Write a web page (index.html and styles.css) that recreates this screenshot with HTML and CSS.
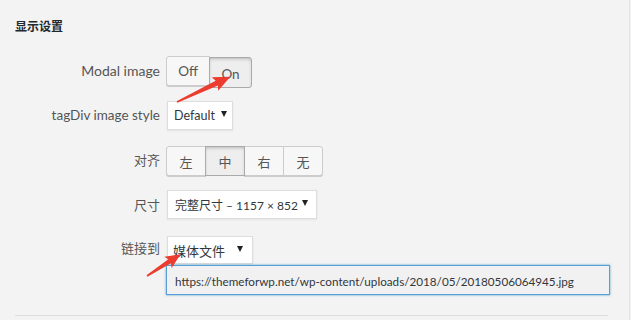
FILE: index.html
```html
<!DOCTYPE html>
<html lang="zh-CN">
<head>
    <meta charset="UTF-8">
    <title>显示设置</title>
    <link rel="stylesheet" href="styles.css">
</head>
<body>
    <div class="panel">
        <h2 class="title">显示设置</h2>

        <div class="settings">
            <div class="row row-modal">
                <span class="label">Modal image</span>
                <div class="btn-group">
                    <span class="btn">Off</span>
                    <span class="btn active">On</span>
                </div>
            </div>

            <div class="row row-style">
                <span class="label">tagDiv image style</span>
                <div class="select sel-style">Default <span class="caret"></span></div>
            </div>

            <div class="row row-align">
                <span class="label">对齐</span>
                <div class="btn-group">
                    <span class="btn btn-align">左</span>
                    <span class="btn btn-align active">中</span>
                    <span class="btn btn-align">右</span>
                    <span class="btn btn-align">无</span>
                </div>
            </div>

            <div class="row row-size">
                <span class="label">尺寸</span>
                <div class="select sel-size">完整尺寸 – 1157 × 852 <span class="caret"></span></div>
            </div>

            <div class="row row-link">
                <span class="label">链接到</span>
                <div class="link-col">
                    <div class="select sel-link">媒体文件 <span class="caret"></span></div>
                    <div class="url-input">https://themeforwp.net/wp-content/uploads/2018/05/20180506064945.jpg</div>
                </div>
            </div>
        </div>

        <div class="divider"></div>
    </div>

    <!-- red annotation arrows drawn over the form -->
    <svg class="arrows" width="631" height="320" viewBox="0 0 631 320">
        <g transform="translate(177 102) rotate(-25.3)">
            <polygon points="0,-0.9 44,-2.6 42,-7.5 59,0 42,7.5 44,2.6 0,0.9"/>
        </g>
        <g transform="translate(147 276) rotate(-33)">
            <polygon points="0,-0.9 27,-2.4 25,-6.8 40,0 25,6.8 27,2.4 0,0.9"/>
        </g>
    </svg>
</body>
</html>
```

FILE: styles.css
```css
    body {
        margin: 0;
        background-color: #f3f3f3;
        font-family: Lato, "Noto Sans CJK SC", sans-serif;
        font-size: 13.5px;
        color: #555;
    }

    .panel {
        height: 320px;
        padding-left: 15px;
        width: 614px;
        border-right: 1px solid #e2e2e2;
    }

    .title {
        margin: 0;
        padding-top: 16px;
        font-size: 12px;
        line-height: 20px;
        font-weight: bold;
        color: #23282d;
        font-family: "Noto Sans CJK SC", sans-serif;
    }

    .settings {
        display: flex;
        flex-direction: column;
    }

    .row {
        display: flex;
        align-items: center;
        gap: 6px;
    }

    .label {
        width: 145px;
        text-align: right;
        flex-shrink: 0;
        white-space: nowrap;
    }

    .row-modal { margin-top: 20px; }
    .row-modal .label { margin-top: -3px; font-size: 14px; }
    .row-style { margin-top: 13px; }
    .row-style .label { margin-top: -1px; }
    .row-align { margin-top: 16px; }
    .row-align .label { margin-top: -3px; font-family: "Noto Sans CJK SC", sans-serif; font-size: 13px; }
    .row-size { margin-top: 14px; }
    .row-size .label { margin-top: -1px; font-family: "Noto Sans CJK SC", sans-serif; font-size: 13px; }
    .row-link { margin-top: 17px; align-items: flex-start; }
    .row-link .label { margin-top: 2px; font-family: "Noto Sans CJK SC", sans-serif; font-size: 13px; }

    .btn-group {
        display: flex;
    }

    .btn {
        display: flex;
        align-items: center;
        justify-content: center;
        height: 28px;
        padding: 0 12px;
        border: 1px solid #ccc;
        background-color: #f7f7f7;
        box-shadow: 0 1px 0 #ccc;
        color: #555;
    }

    .btn + .btn {
        margin-left: -1px;
    }

    .btn:first-child {
        border-radius: 3px 0 0 3px;
    }

    .btn:last-child {
        border-radius: 0 3px 3px 0;
    }

    .btn.active {
        background-color: #eee;
        border-color: #aaa;
        box-shadow: inset 0 2px 5px -3px rgba(0, 0, 0, 0.5);
        position: relative;
    }

    .btn-align {
        width: 38px;
        padding: 0;
        font-family: "Noto Sans CJK SC", sans-serif;
        font-size: 13px;
    }

    .row-modal .btn:first-child { width: 42px; padding: 0; }
    .row-modal .btn.active { width: 41px; padding: 3px 0 0; margin-top: 1px; height: 26px; }

    .select {
        display: flex;
        align-items: center;
        box-sizing: border-box;
        height: 29px;
        margin-left: 1px;
        padding: 0 5px 0 6px;
        background-color: #fff;
        border: 1px solid #ddd;
        box-shadow: 0 1px 2px rgba(0, 0, 0, 0.07);
        color: #32373c;
        font-size: 12.5px;
        white-space: nowrap;
    }

    .caret {
        width: 0;
        height: 0;
        margin-left: auto;
        margin-top: -3px;
        border-left: 3px solid transparent;
        border-right: 3px solid transparent;
        border-top: 6px solid #222;
    }

    .sel-style { width: 66px; }
    .sel-size { width: 150px; font-size: 12px; padding-left: 7px; padding-right: 8px; }
    .sel-link { width: 86px; height: 28px; font-family: "Noto Sans CJK SC", sans-serif; font-size: 13px; padding-left: 5px; padding-right: 9px; }

    .link-col {
        display: flex;
        flex-direction: column;
    }

    .url-input {
        width: 444px;
        height: 30px;
        line-height: 30px;
        box-sizing: border-box;
        margin-top: 1px;
        padding: 0 8px;
        border: 1px solid #5b9dd9;
        box-shadow: 0 0 2px rgba(30, 140, 190, 0.8);
        background-color: #f1f1f1;
        color: #32373c;
        font-size: 11.7px;
        white-space: nowrap;
    }

    .divider {
        width: 593px;
        margin-top: 20px;
        border-top: 1px solid #ddd;
    }

    .arrows {
        position: absolute;
        top: 0;
        left: 0;
        fill: #ec3b2f;
    }
```
